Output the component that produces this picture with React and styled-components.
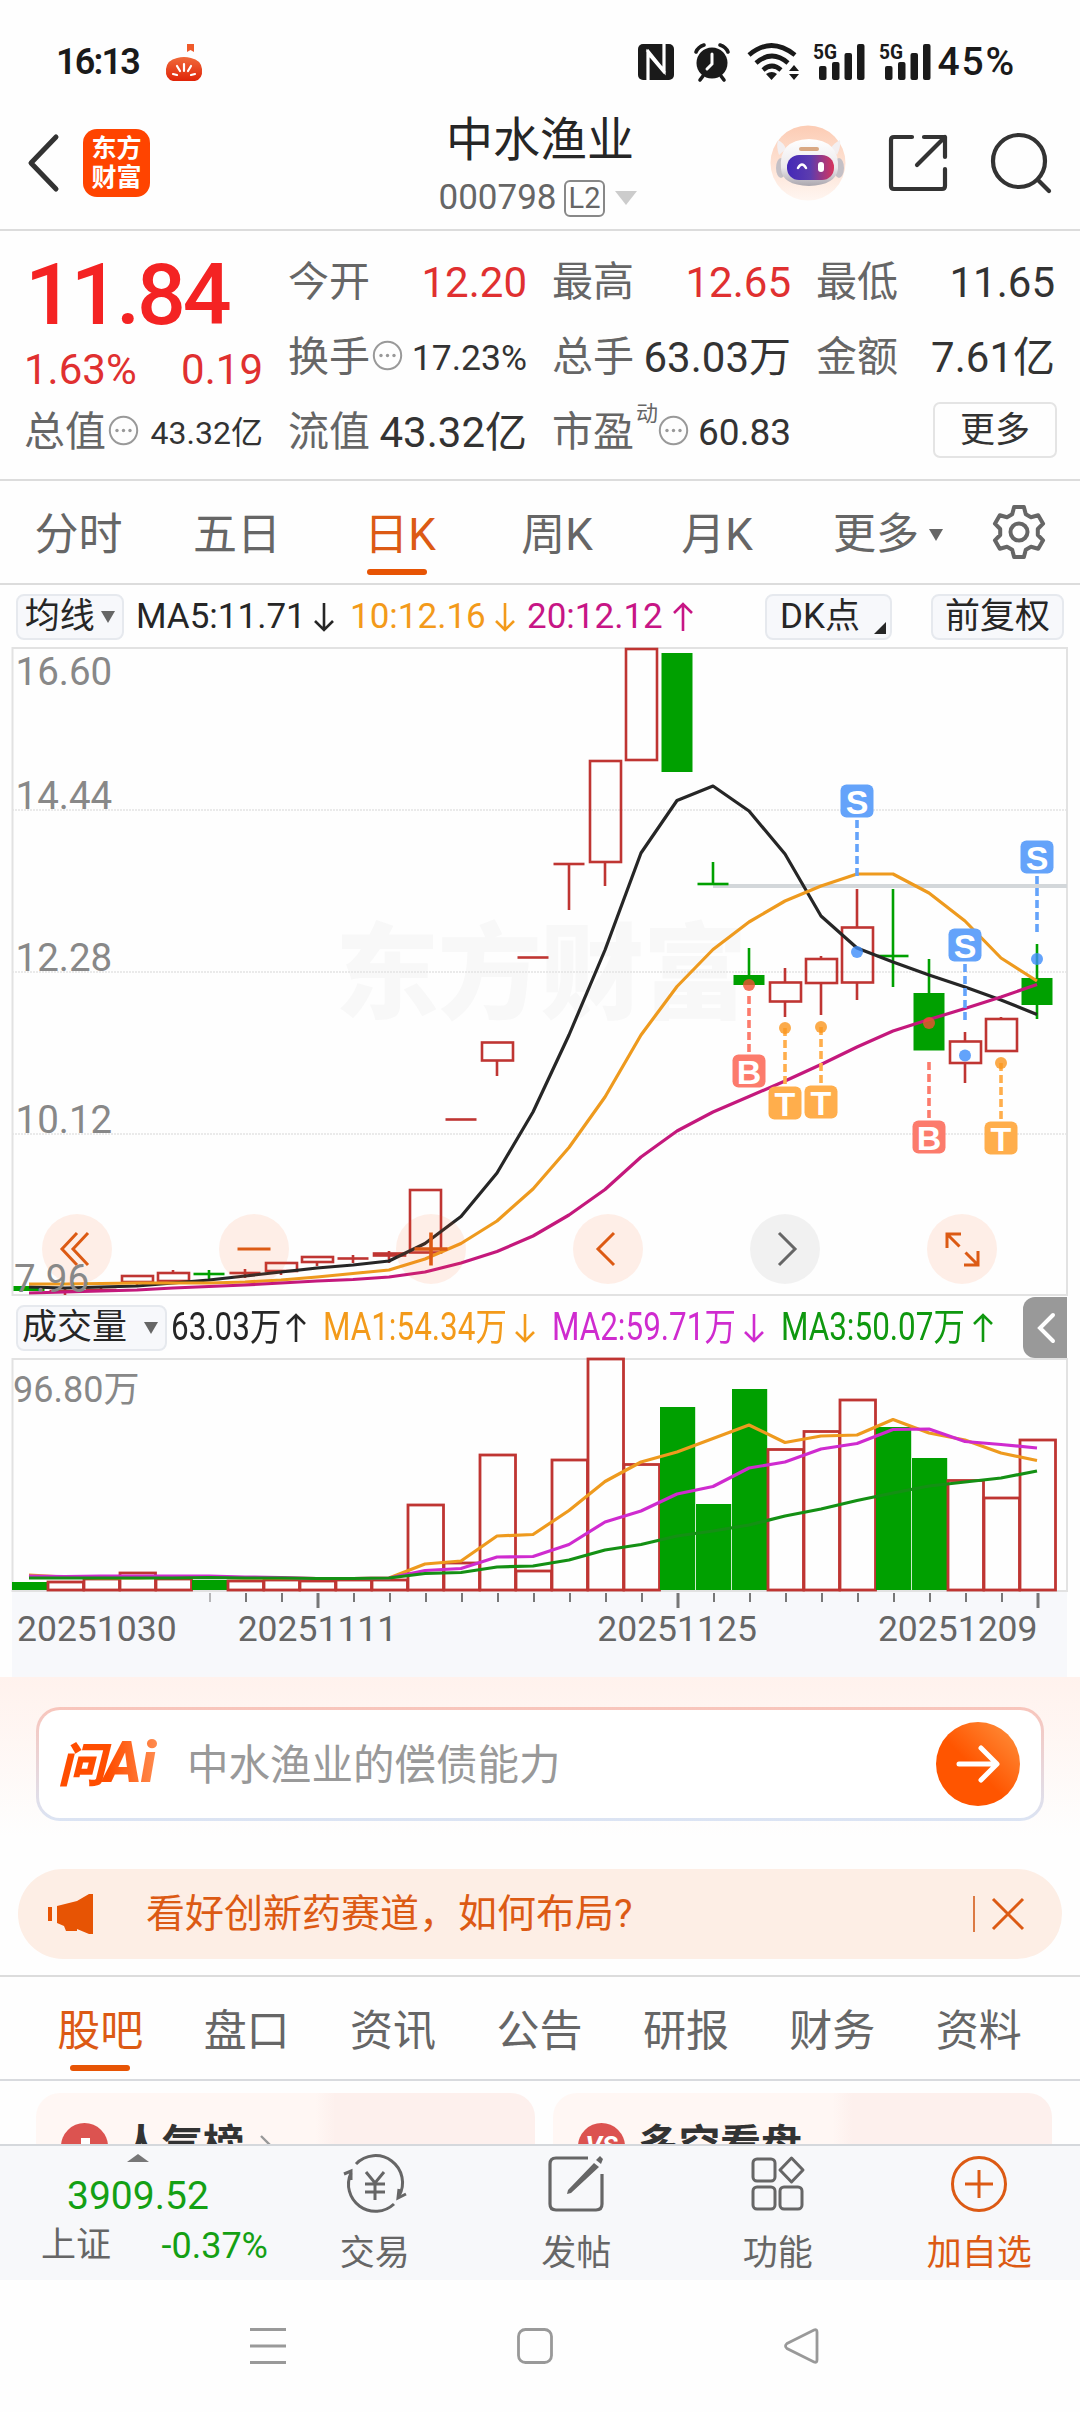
import styled, { createGlobalStyle, css } from "styled-components";

const RED = "#bf3532";
const GREEN = "#00a000";
const ORANGE = "#e75404";

const STEP = 36;
const FIRST_X = 29;
const xAt = (i) => FIRST_X + i * STEP;

// up, high, body top, body bottom, low
const candles = [
  [0, 1286, 1286, 1291, 1291],
  [1, 1289, 1291, 1291, 1295],
  [1, 1288, 1290, 1290, 1292],
  [1, 1276, 1276, 1282, 1287],
  [1, 1270, 1273, 1281, 1281],
  [0, 1270, 1274, 1274, 1279],
  [1, 1269, 1273, 1273, 1278],
  [1, 1263, 1263, 1271, 1275],
  [1, 1257, 1257, 1262, 1266],
  [1, 1255, 1258.5, 1258.5, 1263],
  [1, 1251, 1253.5, 1255.5, 1263],
  [1, 1190, 1190, 1252.5, 1252.5],
  [1, 1119.5, 1119.5, 1119.5, 1119.5],
  [1, 1042.5, 1042.5, 1060.5, 1076],
  [1, 957.5, 957.5, 957.5, 957.5],
  [1, 864, 864, 864, 910],
  [1, 761, 761, 862, 886],
  [1, 649, 649, 760, 760],
  [0, 653, 653, 772, 772],
  [0, 862, 884, 884, 884],
  [0, 948, 975, 985, 985],
  [1, 968, 982.5, 1001.5, 1017],
  [1, 956, 959, 983, 1015],
  [1, 889, 927.5, 982.5, 1000],
  [0, 889, 956, 956, 987],
  [0, 959, 993, 1050.5, 1050.5],
  [1, 1032, 1041.5, 1063, 1083],
  [1, 1017, 1019, 1051, 1051],
  [0, 944, 978, 1005, 1019],
];

const ma5 = [1287, 1288, 1287, 1286, 1283, 1280, 1276, 1272, 1268, 1265, 1261, 1243.5, 1216.5, 1173, 1112, 1035, 950, 853, 800.5, 786, 811, 854, 916, 948, 962, 975, 987, 1000, 1014.5];
const ma10 = [1284, 1284, 1283.5, 1283, 1283, 1283, 1282, 1280, 1277, 1273.5, 1270, 1259, 1243.5, 1221, 1189, 1147.5, 1097, 1035, 986.5, 949.5, 922, 901, 886, 874, 874, 893, 921, 958, 981];
const ma20 = [1293, 1292, 1291, 1290, 1288, 1286.5, 1285, 1283, 1281, 1279.5, 1277, 1272, 1263, 1251.5, 1236, 1215, 1189.5, 1157, 1131, 1112, 1096.5, 1081, 1064.5, 1047, 1031, 1019.5, 1008.5, 997, 984.5];

const volumes = [1582, 1582, 1579, 1573, 1579, 1580, 1581, 1580, 1581, 1580, 1580, 1505, 1563, 1455, 1571, 1460, 1359, 1464.5, 1407, 1504, 1389, 1449.5, 1431.5, 1400, 1427, 1458, 1480.5, 1498, 1440];
const volUp = [0, 1, 1, 1, 1, 0, 1, 1, 1, 1, 1, 1, 1, 1, 1, 1, 1, 1, 0, 0, 0, 1, 1, 1, 0, 0, 1, 1, 1];
const vma1 = [1575, 1577, 1578, 1578, 1577, 1577, 1578, 1578, 1578.5, 1578.5, 1578, 1564, 1561, 1536, 1534.5, 1510.5, 1481.5, 1462, 1452, 1438.5, 1425, 1442.5, 1436, 1435, 1419.5, 1433, 1440, 1453, 1460.5];
const vma2 = [1576, 1576.5, 1576, 1576, 1576, 1576, 1577, 1577.5, 1578.5, 1578.5, 1578, 1570.5, 1568.5, 1557, 1556.5, 1544.5, 1522, 1511, 1494, 1486.5, 1468, 1462, 1449, 1443.5, 1429.5, 1429, 1441.5, 1444.5, 1448];
const vma3 = [1578, 1578, 1578, 1578, 1578, 1577.5, 1578, 1578, 1578.5, 1578.5, 1578, 1573.5, 1572.5, 1567, 1566, 1560, 1550, 1544.5, 1536, 1531, 1525, 1516, 1509, 1500.5, 1493, 1486, 1482, 1478, 1471];

// candle index, letter, badge centre, dash start, dot centre
const signals = [
  [20, "B", 1071, 996, 985],
  [21, "T", 1103, 1028, 1028],
  [22, "T", 1102, 1027, 1027],
  [23, "S", 801, 820, 952],
  [25, "B", 1137, 1062, 1023],
  [26, "S", 945, 964, 1055.5],
  [27, "T", 1138, 1063, 1063],
  [28, "S", 857, 876, 959],
];
const signalColor = { B: "#fc7b6c", T: "#ffae4c", S: "#64a3fa" };
const dotColor = { B: "rgba(240,80,50,.8)", T: "rgba(250,150,30,.8)", S: "rgba(60,140,250,.8)" };

const toPoints = (ys) => ys.map((y, i) => `${xAt(i)},${y}`).join(" ");

const gear = Array.from({ length: 6 })
  .map((_, k) => {
    const mid = -90 + k * 60;
    return [
      [19, mid - 21],
      [25.5, mid - 11],
      [25.5, mid + 11],
      [19, mid + 21],
    ]
      .map(([r, a]) => {
        const rad = (a * Math.PI) / 180;
        return `${(28 + r * Math.cos(rad)).toFixed(1)},${(28 + r * Math.sin(rad)).toFixed(1)}`;
      })
      .join(" ");
  })
  .join(" ");

function Line({ data, color }) {
  return <polyline points={toPoints(data)} fill="none" stroke={color} strokeWidth="3.2" strokeLinejoin="round" />;
}

function Candle({ index, data }) {
  const [up, high, top, bottom, low] = data;
  const x = xAt(index);
  const color = up ? RED : GREEN;
  if (top === bottom) {
    return (
      <g stroke={color} strokeWidth="2.6">
        <line x1={x - 15.5} x2={x + 15.5} y1={top} y2={top} />
        <line x1={x} x2={x} y1={high} y2={low} />
      </g>
    );
  }
  return (
    <g stroke={color} strokeWidth="2.6">
      {high < top && <line x1={x} x2={x} y1={high} y2={top} />}
      {low > bottom && <line x1={x} x2={x} y1={bottom} y2={low} />}
      {up ? (
        <rect x={x - 15} y={top} width="31" height={bottom - top} fill="none" />
      ) : (
        <rect x={x - 15.5} y={top} width="31" height={bottom - top} fill={GREEN} stroke="none" />
      )}
    </g>
  );
}

function Signal({ data }) {
  const [index, letter, y, dash, dot] = data;
  const x = xAt(index);
  return (
    <g>
      <line x1={x} x2={x} y1={dash} y2={dash + 56} stroke={signalColor[letter]} strokeWidth="3.6" strokeDasharray="8 4" />
      <circle cx={x} cy={dot} r="6" fill={dotColor[letter]} />
      <rect x={x - 16.5} y={y - 16.5} width="33" height="33" rx="6" fill={signalColor[letter]} />
      <text x={x} y={y + 12.5} textAnchor="middle" fontSize="34" fontWeight="700" fill="#fff" fontFamily="Liberation Sans, sans-serif">
        {letter}
      </text>
    </g>
  );
}

function PriceChart() {
  return (
    <ChartSvg width="1080" height="650" viewBox="0 647 1080 650">
      <text x="335" y="1011" fontSize="104" fontWeight="900" fill="#f8f8f8" textLength="412">
        东方财富
      </text>
      {[810, 972, 1134].map((y) => (
        <line key={y} x1="12" x2="1067" y1={y} y2={y} stroke="#e4e4e4" strokeWidth="1.4" strokeDasharray="2 1" />
      ))}
      <rect x="12.5" y="648" width="1054.5" height="647" fill="none" stroke="#e2e2e2" strokeWidth="2" />
      <rect x="713" y="884" width="354" height="4" fill="#d3d7da" />
      {candles.map((c, i) => (
        <Candle key={i} index={i} data={c} />
      ))}
      <Line data={ma5} color="#262626" />
      <Line data={ma10} color="#ee9a1e" />
      <Line data={ma20} color="#c4187c" />
      {signals.map((s) => (
        <Signal key={s[0]} data={s} />
      ))}
    </ChartSvg>
  );
}

function PriceLabels() {
  return (
    <LabelSvg width="200" height="650" viewBox="0 647 200 650" fontSize="38.5" fill="#888">
      <text x="15.5" y="685">16.60</text>
      <text x="15.5" y="809">14.44</text>
      <text x="15.5" y="971">12.28</text>
      <text x="15.5" y="1133">10.12</text>
      <text x="14" y="1292">7.96</text>
    </LabelSvg>
  );
}

function VolumeChart() {
  return (
    <ChartSvg width="1080" height="234" viewBox="0 1358 1080 234">
      <rect x="12.5" y="1359" width="1054.5" height="232" fill="none" stroke="#e2e2e2" strokeWidth="2" />
      <text x="13" y="1402" fontSize="36" fill="#888">
        96.80万
      </text>
      {volumes.map((y, i) =>
        volUp[i] ? (
          <rect key={i} x={xAt(i) - 17} y={y} width="35.5" height={1590 - y} fill="none" stroke={RED} strokeWidth="2.8" />
        ) : (
          <rect key={i} x={xAt(i) - 17} y={y} width="35.2" height={1590 - y} fill={GREEN} />
        )
      )}
      <Line data={vma1} color="#ee9a1e" />
      <Line data={vma2} color="#cf2bcf" />
      <Line data={vma3} color="#149014" />
    </ChartSvg>
  );
}

function Arrow({ up }) {
  return (
    <svg width="20" height="30" viewBox="0 0 20 30" fill="none" stroke="currentColor" strokeWidth="2.6">
      {up ? <path d="M10 29V2M1 11 10 2l9 9" /> : <path d="M10 1v27M1 19l9 9 9-9" />}
    </svg>
  );
}

function Info() {
  return (
    <InfoSvg width="31" height="31" viewBox="0 0 31 31">
      <circle cx="15.5" cy="15.5" r="13.7" fill="none" stroke="#999" strokeWidth="2" />
      <circle cx="9" cy="15.5" r="1.7" fill="#999" />
      <circle cx="15.5" cy="15.5" r="1.7" fill="#999" />
      <circle cx="22" cy="15.5" r="1.7" fill="#999" />
    </InfoSvg>
  );
}

function Signal5G() {
  return (
    <svg width="52" height="40" viewBox="0 0 52 40" fill="#1a1a1a">
      <text x="0" y="17" fontSize="21" fontWeight="700" textLength="24" lengthAdjust="spacingAndGlyphs">
        5G
      </text>
      <rect x="6" y="24" width="7.5" height="14" rx="2" />
      <rect x="19" y="20" width="7.5" height="18" rx="2" />
      <rect x="31.5" y="11" width="7.5" height="27" rx="2" />
      <rect x="44" y="2" width="7.5" height="36" rx="2" />
    </svg>
  );
}

function StatusIcons() {
  return (
    <StatusRight>
      <svg width="36" height="36" viewBox="0 0 36 36">
        <rect width="36" height="36" rx="5" fill="#1a1a1a" />
        <path d="M10 36V9l17 20M26 0v27L9 6" fill="none" stroke="#fff" strokeWidth="3.2" />
      </svg>
      <svg width="36" height="38" viewBox="0 0 36 38">
        <circle cx="18" cy="20" r="15.5" fill="#1a1a1a" />
        <path d="M2 9q2-5 8-7M34 9q-2-5-8-7M9 33l-3 4M27 33l3 4" stroke="#1a1a1a" strokeWidth="3.6" fill="none" strokeLinecap="round" />
        <path d="M18 11v10l-5 5" stroke="#fff" strokeWidth="3" fill="none" strokeLinecap="round" />
      </svg>
      <svg width="52" height="38" viewBox="0 0 52 38" fill="none" stroke="#1a1a1a" strokeWidth="4.6">
        <path d="M2 12q22-19 46 0M9 20q16-14 32 0M16 27q9-8 18 0" />
        <path d="M19 31q6-4 11 0l-5.5 6z" fill="#1a1a1a" stroke="none" />
        <path d="M42 28l5-6 5 6zM42 31h10l-5 6z" fill="#1a1a1a" stroke="none" />
      </svg>
      <Signal5G />
      <Signal5G />
      <Battery>45%</Battery>
    </StatusRight>
  );
}

function Tomato() {
  return (
    <svg width="38" height="38" viewBox="0 0 38 38">
      <defs>
        <linearGradient id="tomato" x1="0" y1="0" x2="0" y2="1">
          <stop offset="0" stopColor="#f06a3a" />
          <stop offset="1" stopColor="#e02408" />
        </linearGradient>
      </defs>
      <path d="M22 0h7v8l-3.5-2-3.5 2z" fill="#ef5a2a" />
      <path d="M8 37Q0 35 1 25q1-9 11-11 7-2 14 0 10 2 11 11 1 10-7 12z" fill="url(#tomato)" />
      <path d="M19 20v7M12 22l3 5M26 22l-3 5M8 30l4 1M30 30l-4 1" stroke="#fff" strokeWidth="2.2" strokeLinecap="round" />
    </svg>
  );
}

function Robot() {
  return (
    <svg width="76" height="76" viewBox="0 0 76 76">
      <defs>
        <linearGradient id="halo" x1="0" y1="0" x2="0" y2="1">
          <stop offset="0" stopColor="#fcccb4" />
          <stop offset="1" stopColor="#fff6f1" />
        </linearGradient>
        <linearGradient id="visor" x1="0" y1="0" x2="1" y2="0">
          <stop offset="0" stopColor="#4328b8" />
          <stop offset=".5" stopColor="#5c3cae" />
          <stop offset="1" stopColor="#d8345c" />
        </linearGradient>
        <linearGradient id="shell" x1="0" y1="0" x2="0" y2="1">
          <stop offset="0" stopColor="#ffffff" />
          <stop offset=".6" stopColor="#ece9ec" />
          <stop offset="1" stopColor="#aaa6ae" />
        </linearGradient>
      </defs>
      <circle cx="38" cy="38" r="37.5" fill="url(#halo)" />
      <path d="M9 30q-3-8-1-15 6 3 8 9zM67 30q4-8 3-15-6 3-9 8z" fill="#f3eff1" />
      <ellipse cx="11" cy="43" rx="5" ry="10" fill="#c4c0c6" />
      <ellipse cx="69" cy="43" rx="5" ry="10" fill="#c4c0c6" />
      <path d="M11 44q-3-29 28-30 31 1 29 30-2 16-29 17-27-1-28-17z" fill="url(#shell)" />
      <rect x="29" y="22" width="20" height="4" rx="2" fill="#d9a883" />
      <rect x="17" y="30" width="47" height="25" rx="12" fill="url(#visor)" />
      <path d="M28 43q4-7 8 0" fill="none" stroke="#fff" strokeWidth="2.5" strokeLinecap="round" />
      <rect x="48" y="37" width="6" height="10" rx="3" fill="#fff" />
    </svg>
  );
}

const periods = ["分时", "五日", "日K", "周K", "月K"];
const sections = ["股吧", "盘口", "资讯", "公告", "研报", "财务", "资料"];

function App() {
  return (
    <>
      <GlobalStyle />
      <Page>
        <StatusBar>
          <Clock>16:13</Clock>
          <Tomato />
          <StatusIcons />
        </StatusBar>

        <Header>
          <svg width="34" height="60" viewBox="0 0 34 60" fill="none" stroke="#333" strokeWidth="5">
            <path d="M30 4 5 30l25 26" strokeLinecap="round" strokeLinejoin="round" />
          </svg>
          <AppLogo>
            <span>东方</span>
            <span>财富</span>
          </AppLogo>
          <TitleBlock>
            <Title>中水渔业</Title>
            <Code>
              000798
              <Level>L2</Level>
              <Triangle $w={23} $h={14} $color="#ccc" />
            </Code>
          </TitleBlock>
          <HeaderTools>
            <Robot />
            <svg width="60" height="60" viewBox="0 0 60 60" fill="none" stroke="#333" strokeWidth="4.2" strokeLinecap="round" strokeLinejoin="round">
              <path d="M24 4H6q-3 0-3 3v46q0 3 3 3h48q3 0 3-3V36M36 4h21v20M57 4 29 32" />
            </svg>
            <svg width="62" height="62" viewBox="0 0 62 62" fill="none" stroke="#333" strokeWidth="4.2">
              <circle cx="29" cy="29" r="26" />
              <path d="M48 48l11 11" strokeLinecap="round" />
            </svg>
          </HeaderTools>
        </Header>

        <Quote>
          <QuoteMain>
            <Price>11.84</Price>
            <Change>
              <span>1.63%</span>
              <span>0.19</span>
            </Change>
            <Cell>
              <Label>总值</Label>
              <Info />
              <Value $size={32}>43.32亿</Value>
            </Cell>
          </QuoteMain>
          <QuoteGrid>
            <Cell>
              <Label>今开</Label>
              <Value $up>12.20</Value>
            </Cell>
            <Cell>
              <Label>最高</Label>
              <Value $up>12.65</Value>
            </Cell>
            <Cell>
              <Label>最低</Label>
              <Value>11.65</Value>
            </Cell>
            <Cell>
              <Label>换手</Label>
              <Info />
              <Value $size={35.5}>17.23%</Value>
            </Cell>
            <Cell>
              <Label>总手</Label>
              <Value>63.03万</Value>
            </Cell>
            <Cell>
              <Label>金额</Label>
              <Value>7.61亿</Value>
            </Cell>
            <Cell>
              <Label>流值</Label>
              <Value>43.32亿</Value>
            </Cell>
            <Cell>
              <Label>市盈</Label>
              <Sup>动</Sup>
              <Info />
              <Value $size={37}>60.83</Value>
            </Cell>
            <Cell>
              <MoreButton>更多</MoreButton>
            </Cell>
          </QuoteGrid>
        </Quote>

        <PeriodTabs>
          {periods.map((p) => (
            <Tab key={p} $active={p === "日K"}>
              {p}
            </Tab>
          ))}
          <MoreTab>
            更多
            <Triangle $w={14} $h={12} $color="#666" />
          </MoreTab>
          <svg width="56" height="56" viewBox="0 0 56 56" fill="none" stroke="#666" strokeWidth="4">
            <polygon points={gear} strokeLinejoin="round" />
            <circle cx="28" cy="28" r="8.5" />
          </svg>
        </PeriodTabs>

        <IndicatorRow>
          <Chip $w={108}>
            均线
            <Triangle $w={14} $h={12} $color="#666" />
          </Chip>
          <Ma $color="#262626" $ml={12} $w={178}>
            MA5:11.71
          </Ma>
          <Ma $color="#262626" $w={36}>
            <Arrow />
          </Ma>
          <Ma $color="#f39a1a" $w={145}>
            10:12.16
          </Ma>
          <Ma $color="#f39a1a" $w={32}>
            <Arrow />
          </Ma>
          <Ma $color="#c71585" $w={146}>
            20:12.12
          </Ma>
          <Ma $color="#c71585">
            <Arrow up />
          </Ma>
          <ChipGroup>
            <DkChip $w={127}>
              DK点
              <Corner />
            </DkChip>
            <Chip $w={133}>前复权</Chip>
          </ChipGroup>
        </IndicatorRow>

        <ChartBox>
          <PriceChart />
          <RoundButtons>
            <RoundButton>
              <path d="M35 19 20 35l15 16M46 19 31 35l15 16" />
            </RoundButton>
            <RoundButton>
              <path d="M18.5 35h33" />
            </RoundButton>
            <RoundButton>
              <path d="M18.5 35h33M35 18.5v33" strokeWidth="3.6" />
            </RoundButton>
            <RoundButton>
              <path d="M41 19 25 35l16 16" />
            </RoundButton>
            <RoundButton $muted>
              <path d="M29 19l16 16-16 16" />
            </RoundButton>
            <RoundButton>
              <path d="M34 20H20v14M20 20l12.5 12.5M51 37v14H37M51 51 38.5 38.5" />
            </RoundButton>
          </RoundButtons>
          <PriceLabels />
        </ChartBox>

        <VolumeRow>
          <VolumeChip $w={151}>
            成交量
            <Triangle $w={14} $h={12} $color="#666" />
          </VolumeChip>
          <Narrow $color="#262626" $w={119}>
            63.03万
          </Narrow>
          <Ma $color="#262626" $w={33}>
            <Arrow up />
          </Ma>
          <Narrow $color="#f39a1a" $w={196}>
            MA1:54.34万
          </Narrow>
          <Ma $color="#f39a1a" $w={33}>
            <Arrow />
          </Ma>
          <Narrow $color="#cf2bcf" $w={196}>
            MA2:59.71万
          </Narrow>
          <Ma $color="#cf2bcf" $w={33}>
            <Arrow />
          </Ma>
          <Narrow $color="#0f980f" $w={196}>
            MA3:50.07万
          </Narrow>
          <Ma $color="#0f980f">
            <Arrow up />
          </Ma>
          <Fold>
            <svg width="20" height="32" viewBox="0 0 20 32" fill="none" stroke="#fff" strokeWidth="4">
              <path d="M17 3 4 16l13 13" strokeLinecap="round" />
            </svg>
          </Fold>
        </VolumeRow>
        <VolumeChart />

        <Axis>
          <svg width="1055" height="18" viewBox="12 0 1055 18" stroke="#777">
            {candles.map((_, i) =>
              i < 5 ? null : (
                <line
                  key={i}
                  x1={xAt(i) + 1}
                  x2={xAt(i) + 1}
                  y1="1"
                  y2={i % 10 === 8 ? 16 : 10}
                  strokeWidth={i % 10 === 8 ? 3 : 2}
                  opacity={i === 5 ? 0.5 : 1}
                />
              )
            )}
          </svg>
          <Dates>
            <span>20251030</span>
            <span>20251111</span>
            <span>20251125</span>
            <span>20251209</span>
          </Dates>
        </Axis>

        <AskArea>
          <AskBox>
            <AskLogo>
              问<b>Ai</b>
            </AskLogo>
            <AskText>中水渔业的偿债能力</AskText>
            <AskButton>
              <svg width="44" height="40" viewBox="0 0 44 40" fill="none" stroke="#fff" strokeWidth="5" strokeLinecap="round" strokeLinejoin="round">
                <path d="M3 20h37M25 4l16 16-16 16" />
              </svg>
            </AskButton>
          </AskBox>
        </AskArea>

        <BannerArea>
          <Banner>
            <svg width="46" height="40" viewBox="0 0 46 40" fill={ORANGE}>
              <path d="M0 13h4v14H0zM9 12l20-5L41 0h4v40h-4l-12-5v2H18l-2-5-7-3z" />
            </svg>
            <BannerText>看好创新药赛道，如何布局?</BannerText>
            <Separator />
            <svg width="34" height="34" viewBox="0 0 34 34" stroke="#dc5a14" strokeWidth="3">
              <path d="M2 2l30 30M32 2 2 32" />
            </svg>
          </Banner>
        </BannerArea>

        <SectionTabs>
          {sections.map((s) => (
            <SectionTab key={s} $active={s === "股吧"}>
              {s}
            </SectionTab>
          ))}
        </SectionTabs>

        <Cards>
          <Card>
            <Round>
              <svg width="24" height="22" viewBox="0 0 24 22" fill="#fff">
                <path d="M8 3h9v19H8zM0 13h7v9H0zM18 13h6v9h-6z" />
              </svg>
            </Round>
            人气榜
            <svg width="14" height="24" viewBox="0 0 14 24" fill="none" stroke="#999" strokeWidth="2.4">
              <path d="M2 2l10 10L2 22" />
            </svg>
          </Card>
          <Card>
            <Round>
              <i>VS</i>
            </Round>
            多空看盘
          </Card>
        </Cards>

        <BottomBar>
          <IndexBox>
            <Up />
            <IndexValue>3909.52</IndexValue>
            <IndexRow>
              <span>上证</span>
              <em>-0.37%</em>
            </IndexRow>
          </IndexBox>
          <Action>
            <svg width="66" height="60" viewBox="0 0 66 60" fill="none" stroke="#666" strokeWidth="3">
              <path d="M14 10A27 27 0 0 1 57 42M52 50A27 27 0 0 1 9 19" />
              <path d="M2 20l7-3v9M64 40l-8 4 1-9" />
              <path d="M24 18l9 11 9-11M33 29v17M23 30h20M23 38h20" />
            </svg>
            交易
          </Action>
          <Action>
            <svg width="60" height="60" viewBox="0 0 60 60" fill="none" stroke="#666" strokeWidth="3.2">
              <path d="M42 4H10q-6 0-6 6v40q0 6 6 6h40q6 0 6-6V20" />
              <path d="M48 9l5 4-28 26-4 1 1-4zM50 6l4-4 3 3-2 5z" fill="#666" stroke="none" />
            </svg>
            发帖
          </Action>
          <Action>
            <svg width="60" height="60" viewBox="0 0 60 60" fill="none" stroke="#666" strokeWidth="3">
              <rect x="5" y="5" width="22" height="22" rx="4" />
              <rect x="5" y="33" width="22" height="22" rx="4" />
              <rect x="32" y="33" width="22" height="22" rx="4" />
              <path d="M43.5 4 55 16 43.5 28 32 16z" strokeLinejoin="round" />
            </svg>
            功能
          </Action>
          <Action $active>
            <svg width="60" height="60" viewBox="0 0 60 60" fill="none" stroke="#dc5a14" strokeWidth="3">
              <circle cx="30" cy="30" r="26.5" />
              <path d="M16 30h28M30 16v28" />
            </svg>
            加自选
          </Action>
        </BottomBar>

        <SystemBar>
          <svg width="40" height="40" viewBox="0 0 40 40" stroke="#999" strokeWidth="2.8">
            <path d="M2 3.5h36M2 20h36M2 36.5h36" />
          </svg>
          <svg width="40" height="40" viewBox="0 0 40 40" fill="none" stroke="#999" strokeWidth="2.8">
            <rect x="3.5" y="3.5" width="33" height="33" rx="7" />
          </svg>
          <svg width="40" height="40" viewBox="0 0 40 40" fill="none" stroke="#999" strokeWidth="2.8">
            <path d="M5 17.5 32 4q3-1 3 2v28q0 3-3 2L5 22.5q-3-2.5 0-5z" />
          </svg>
        </SystemBar>
      </Page>
    </>
  );
}

function RoundButton({ $muted, children }) {
  return (
    <RoundSvg width="70" height="70" viewBox="0 0 70 70" $muted={$muted}>
      {children}
    </RoundSvg>
  );
}

const GlobalStyle = createGlobalStyle`
  * {
    box-sizing: border-box;
  }

  body {
    margin: 0;
    background: #fefefe;
    font-family: Roboto, "Noto Sans CJK SC", sans-serif;
    line-height: 1.2;
    color: #333;
  }

  svg {
    display: block;
    flex-shrink: 0;
    overflow: visible;
  }
`;

const Page = styled.div`
  width: 1080px;
  height: 2412px;
  overflow: hidden;
  display: flex;
  flex-direction: column;
  background: #fefefe;
  white-space: nowrap;

  > * {
    flex-shrink: 0;
  }
`;

const StatusBar = styled.div`
  height: 93px;
  padding: 32px 65px 0 56px;
  display: flex;
  align-items: center;
  gap: 22px;
`;

const Clock = styled.span`
  width: 87px;
  font-size: 36px;
  font-weight: 600;
  letter-spacing: -1.8px;
  color: #1a1a1a;
`;

const StatusRight = styled.div`
  margin-left: auto;
  display: flex;
  align-items: center;
  gap: 14px;

  svg:nth-child(2) {
    margin-left: 6px;
  }

  svg:nth-child(3) {
    margin-left: 3px;
  }
`;

const Battery = styled.span`
  margin-left: -7px;
  font-size: 39px;
  font-weight: 500;
  letter-spacing: 1.8px;
  margin-right: -1px;
  color: #1a1a1a;
`;

const Header = styled.header`
  height: 138px;
  padding: 4px 28px 0 26px;
  display: flex;
  align-items: center;
  border-bottom: 2px solid #dcdcdc;
`;

const AppLogo = styled.div`
  width: 67px;
  height: 68px;
  margin-left: 23px;
  border-radius: 14px;
  background: #ff4400;
  color: #fff;
  display: flex;
  flex-direction: column;
  align-items: center;
  justify-content: center;
  font-size: 25px;
  font-weight: 700;
  line-height: 29px;
`;

const TitleBlock = styled.div`
  width: 260px;
  margin-left: 260px;
  padding-top: 10px;
  display: flex;
  flex-direction: column;
  align-items: center;
`;

const Title = styled.div`
  font-size: 47px;
  line-height: 60px;
  color: #262626;
`;

const Code = styled.div`
  height: 56px;
  margin-left: -4px;
  display: flex;
  align-items: center;
  font-size: 35px;
  color: #666;
`;

const Level = styled.span`
  height: 37px;
  margin: 0 10px 0 7px;
  padding: 0 3px;
  border: 2px solid #888;
  border-radius: 6px;
  font-size: 29px;
  line-height: 33px;
`;

const Triangle = styled.i`
  border-left: ${(p) => p.$w / 2}px solid transparent;
  border-right: ${(p) => p.$w / 2}px solid transparent;
  border-top: ${(p) => p.$h}px solid ${(p) => p.$color};
`;

const HeaderTools = styled.div`
  margin-left: auto;
  display: flex;
  align-items: center;
  gap: 42px;
`;

const Quote = styled.section`
  height: 250px;
  padding: 14px 25px 0;
  display: flex;
  gap: 26px;
  border-bottom: 2px solid #dcdcdc;
`;

const QuoteMain = styled.div`
  width: 238px;
  display: flex;
  flex-direction: column;
`;

const Price = styled.div`
  height: 98px;
  font-size: 86px;
  line-height: 100px;
  font-weight: 500;
  letter-spacing: -3.2px;
  color: #f42323;
`;

const Change = styled.div`
  height: 52px;
  margin-left: -1px;
  display: flex;
  justify-content: space-between;
  font-size: 42px;
  line-height: 54px;
  color: #e03030;
`;

const QuoteGrid = styled.div`
  display: grid;
  grid-template-columns: repeat(3, 238px);
  grid-auto-rows: 75px;
  column-gap: 26px;
`;

const Cell = styled.div`
  height: 75px;
  padding-top: 1px;
  display: flex;
  align-items: center;
`;

const Label = styled.span`
  margin-left: -1px;
  font-size: 41px;
  color: #666;
`;

const Value = styled.span`
  margin-left: auto;
  font-size: ${(p) => p.$size || 42}px;
  color: ${(p) => (p.$up ? "#e03030" : "#333")};
`;

const InfoSvg = styled.svg`
  margin: -6px 0 0 2px;
`;

const Sup = styled.sup`
  margin: -38px -2px 0 2px;
  font-size: 22px;
  line-height: 26px;
  color: #666;
`;

const MoreButton = styled.div`
  width: 124px;
  height: 56px;
  margin: -6px -2px 0 auto;
  border: 2px solid #e4e4e4;
  border-radius: 7px;
  text-align: center;
  font-size: 35px;
  line-height: 54px;
`;

const underline = css`
  &::after {
    content: "";
    position: absolute;
    left: 50%;
    bottom: 8px;
    width: 60px;
    height: 6px;
    margin-left: -30px;
    border-radius: 3px;
    background: ${ORANGE};
  }
`;

const PeriodTabs = styled.nav`
  height: 104px;
  display: flex;
  align-items: center;
  border-bottom: 2px solid #dcdcdc;
`;

const Tab = styled.div`
  position: relative;
  width: 160px;
  height: 102px;
  text-align: center;
  font-size: 44px;
  line-height: 109px;
  color: ${(p) => (p.$active ? "#dc5a14" : "#666")};
  ${(p) => p.$active && underline}

  &:first-child {
    width: 157px;
  }

  &:nth-child(3) {
    padding-left: 6px;
  }
`;

const MoreTab = styled.div`
  width: 158px;
  margin-right: 36px;
  padding: 6px 0 0 36px;
  display: flex;
  align-items: center;
  gap: 10px;
  font-size: 43px;
  color: #666;
`;

const IndicatorRow = styled.div`
  height: 62px;
  padding: 2px 16px 0 16px;
  display: flex;
  align-items: center;
`;

const Chip = styled.div`
  width: ${(p) => p.$w}px;
  height: 46px;
  display: flex;
  align-items: center;
  justify-content: space-evenly;
  border: 2px solid #e6e9ee;
  border-radius: 8px;
  background: #f7f8fb;
  font-size: 35px;
  line-height: 44px;
  color: #262626;
`;

const VolumeChip = styled(Chip)`
  padding: 0 7px 0 4px;
  justify-content: space-between;
`;

const DkChip = styled(Chip)`
  padding: 0 4px 0 13px;
  justify-content: space-between;
`;

const Corner = styled.i`
  margin-top: 21px;
  border-left: 12px solid transparent;
  border-bottom: 12px solid #262626;
`;

const ChipGroup = styled.div`
  margin-left: auto;
  display: flex;
  gap: 39px;
`;

const Ma = styled.span`
  width: ${(p) => (p.$w ? `${p.$w}px` : "auto")};
  margin-left: ${(p) => p.$ml || 0}px;
  font-size: 35px;
  color: ${(p) => p.$color};
`;

// squeezed digits, all readings have to fit on one line
const Narrow = styled(Ma)`
  margin-left: 4px;
  width: ${(p) => p.$w - 4}px;
  font-size: 38px;
  transform: scaleX(0.827);
  transform-origin: left center;
`;

const ChartBox = styled.div`
  position: relative;
  height: 650px;
`;

const ChartSvg = styled.svg`
  font-family: Roboto, "Noto Sans CJK SC", sans-serif;
`;

const LabelSvg = styled.svg`
  position: absolute;
  left: 0;
  top: 0;
`;

const RoundButtons = styled.div`
  position: absolute;
  left: 42px;
  right: 83px;
  bottom: 13px;
  display: flex;
  justify-content: space-between;
`;

const RoundSvg = styled.svg`
  border-radius: 50%;
  background: ${(p) => (p.$muted ? "rgba(0, 0, 0, 0.05)" : "rgba(255, 100, 30, 0.1)")};
  fill: none;
  stroke: ${(p) => (p.$muted ? "#666" : "#dc5a14")};
  stroke-width: 3;
`;

const VolumeRow = styled.div`
  height: 61px;
  padding: 0 13px 0 16px;
  display: flex;
  align-items: center;
`;

const Fold = styled.div`
  width: 44px;
  height: 61px;
  margin-left: auto;
  padding-left: 13px;
  display: flex;
  align-items: center;
  border-radius: 12px 0 0 12px;
  background: #999;
`;

const Axis = styled.div`
  height: 85px;
  margin: 0 13px 0 12px;
  background: #f7f8fb;
`;

const Dates = styled.div`
  display: flex;
  padding-left: 5px;
  font-size: 35.5px;
  line-height: 38px;
  color: #666;

  span:nth-child(2) {
    margin-left: 61px;
  }

  span:nth-child(3) {
    margin-left: 200px;
  }

  span:nth-child(4) {
    margin-left: 121px;
  }
`;

const AskArea = styled.div`
  height: 192px;
  padding: 30px 36px 0;
  background: linear-gradient(#fff2ed, #fefefe 160px);
`;

const AskBox = styled.div`
  height: 114px;
  padding: 0 21px 0 19px;
  display: flex;
  align-items: center;
  border: 3px solid transparent;
  border-radius: 24px;
  background: linear-gradient(#fff, #fff) padding-box, linear-gradient(#f8c5bb, #dbe4f4) border-box;
`;

const AskLogo = styled.span`
  width: 129px;
  padding-top: 4px;
  font-size: 47px;
  font-weight: 900;
  font-style: italic;
  letter-spacing: -1px;
  color: transparent;
  background: linear-gradient(90deg, #ff4d00 50px, #ff8c50 100px);
  background-clip: text;

  b {
    font-size: 57px;
    font-weight: 900;
    line-height: 50px;
  }
`;

const AskText = styled.span`
  padding-top: 4px;
  font-size: 41.5px;
  color: #999;
`;

const AskButton = styled.div`
  width: 84px;
  height: 84px;
  margin-left: auto;
  display: flex;
  align-items: center;
  justify-content: center;
  border-radius: 50%;
  background: linear-gradient(45deg, #ff5500 45%, #ff9440);
`;

const BannerArea = styled.div`
  height: 108px;
  padding: 0 18px;
  border-bottom: 2px solid #dcdcdc;
`;

const Banner = styled.div`
  height: 90px;
  padding: 0 37px 0 30px;
  display: flex;
  align-items: center;
  border-radius: 45px;
  background: #fdeee5;
`;

const BannerText = styled.span`
  margin-left: 52px;
  padding-top: 1px;
  font-size: 39px;
  color: #dc5a14;
`;

const Separator = styled.i`
  width: 2px;
  height: 36px;
  margin: 0 16px 0 auto;
  background: #dc7a44;
`;

const SectionTabs = styled.nav`
  height: 104px;
  padding: 0 28px 0 27px;
  display: grid;
  grid-template-columns: repeat(7, 1fr);
  border-bottom: 2px solid #d8dade;
`;

const SectionTab = styled.div`
  position: relative;
  height: 102px;
  text-align: center;
  font-size: 43px;
  line-height: 109px;
  color: ${(p) => (p.$active ? "#dc5a14" : "#666")};
  ${(p) => p.$active && underline}
`;

const Cards = styled.div`
  height: 63px;
  padding: 12px 28px 0 36px;
  display: grid;
  grid-template-columns: 1fr 1fr;
  gap: 18px;
  overflow: hidden;
`;

const Card = styled.div`
  height: 110px;
  padding: 0 25px 4px;
  display: flex;
  align-items: center;
  gap: 15px;
  border-radius: 24px;
  background: linear-gradient(90deg, #fff7f4 56%, #fdf0ed 60%);
  font-size: 41px;
  font-weight: 700;
`;

const Round = styled.span`
  width: 47px;
  height: 47px;
  margin-right: -2px;
  display: flex;
  align-items: center;
  justify-content: center;
  border-radius: 50%;
  background: #dc5350;
  color: #fff;
  font-size: 26px;
`;

const BottomBar = styled.footer`
  height: 136px;
  display: grid;
  grid-template-columns: 274px repeat(4, 1fr);
  border-top: 2px solid #d5d8dc;
  background: #f7f8fa;
`;

const IndexBox = styled.div`
  padding: 8px 6px 0 41px;
  display: flex;
  flex-direction: column;
`;

const Up = styled.i`
  width: 0;
  margin-left: 86px;
  border-left: 11px solid transparent;
  border-right: 11px solid transparent;
  border-bottom: 8px solid #777;
`;

const IndexValue = styled.div`
  padding: 10px 0 0 26px;
  font-size: 39px;
  line-height: 48px;
  color: #14a014;
`;

const IndexRow = styled.div`
  display: flex;
  justify-content: space-between;
  font-size: 35px;
  line-height: 52px;
  color: #666;

  em {
    font-style: normal;
    font-size: 36px;
    color: #14a014;
  }
`;

const Action = styled.div`
  padding-top: 8px;
  display: flex;
  flex-direction: column;
  align-items: center;
  font-size: 35px;
  line-height: 79px;
  color: ${(p) => (p.$active ? "#dc5a14" : "#666")};
`;

const SystemBar = styled.div`
  height: 132px;
  padding: 0 258px 0 248px;
  display: flex;
  align-items: center;
  justify-content: space-between;
`;

export default App;
